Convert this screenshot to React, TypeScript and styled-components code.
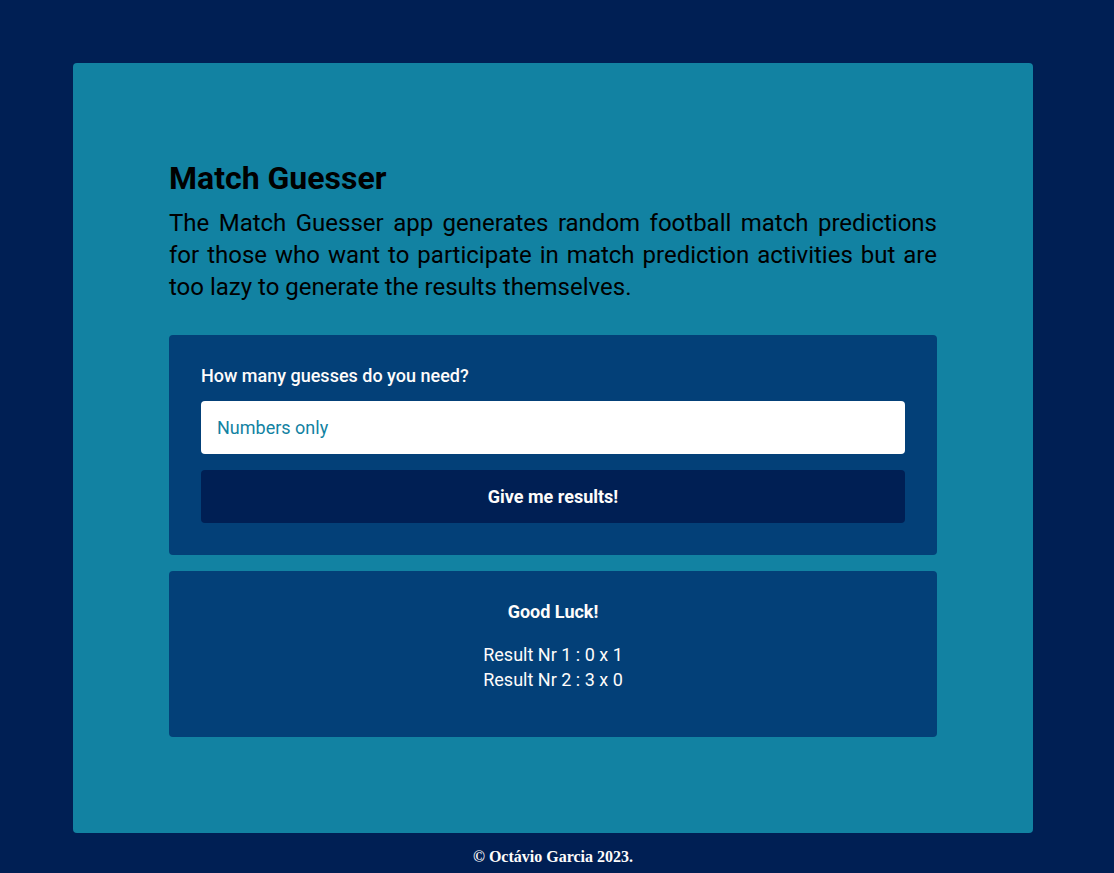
import React from "react";
import styled, { createGlobalStyle } from "styled-components";

const Global = createGlobalStyle`
  html, body { margin: 0; padding: 0; background: #001f54; }
  body { font-family: Roboto, "Noto Sans", sans-serif; }
  * { box-sizing: border-box; }
`;

const Page = styled.div`
  min-height: 873px;
  padding: 63px 81px 0 73px;
  display: flex;
  flex-direction: column;
  align-items: stretch;
`;

const Card = styled.main`
  width: 960px;
  height: 770px;
  background: #1282a2;
  border-radius: 4px;
  padding: 96px 96px 0;
  display: flex;
  flex-direction: column;
`;

const Title = styled.h1`
  margin: 0 0 10px;
  font-size: 32px;
  line-height: 38px;
  font-weight: 700;
  color: #000;
`;

const Intro = styled.p`
  margin: 0 0 32px;
  font-size: 24px;
  line-height: 32px;
  text-align: justify;
  color: #000;
`;

const Panel = styled.section<{ $center?: boolean }>`
  background: #034078;
  border-radius: 4px;
  color: #fefcfb;
  display: flex;
  flex-direction: column;
  text-align: ${(p) => (p.$center ? "center" : "left")};
  & + & { margin-top: 16px; }
`;

const FormPanel = styled(Panel)`
  padding: 32px;
  gap: 16px;
`;

const ResultPanel = styled(Panel)`
  padding: 29px 32px 45px;
`;

const Label = styled.label`
  font-size: 18px;
  line-height: 18px;
  font-weight: 500;
`;

const Input = styled.input`
  height: 53px;
  border: none;
  border-radius: 4px;
  background: #fff;
  padding: 0 16px;
  font-family: Roboto, sans-serif;
  font-size: 18px;
  color: #0a1128;
  caret-color: #000;
  outline: none;
  &::placeholder { color: #1282a2; opacity: 1; }
`;

const Button = styled.button`
  height: 53px;
  border: none;
  border-radius: 4px;
  background: #001f54;
  color: #fefcfb;
  font-family: Roboto, sans-serif;
  font-size: 18px;
  font-weight: 700;
  cursor: pointer;
`;

const LuckHeading = styled.h3`
  margin: 0 0 18px;
  font-size: 18px;
  line-height: 24px;
  font-weight: 700;
`;

const ResultLine = styled.p`
  margin: 0;
  font-size: 18px;
  line-height: 25px;
`;

const Footer = styled.footer`
  width: 960px;
  text-align: center;
  font-family: "Liberation Serif", "Times New Roman", serif;
  font-weight: 700;
  font-size: 16px;
  line-height: 18px;
  color: #fefcfb;
  padding-top: 15px;
`;

const results = ["0 x 1", "3 x 0"];

export default function App() {
  return (
    <>
      <Global />
      <Page>
        <Card>
          <Title>Match Guesser</Title>
          <Intro>
            The Match Guesser app generates random football match predictions
            for those who want to participate in match prediction activities
            but are too lazy to generate the results themselves.
          </Intro>
          <FormPanel>
            <Label htmlFor="guesses">How many guesses do you need?</Label>
            <Input id="guesses" placeholder="Numbers only" autoFocus />
            <Button>Give me results!</Button>
          </FormPanel>
          <ResultPanel $center>
            <LuckHeading>Good Luck!</LuckHeading>
            {results.map((r, i) => (
              <ResultLine key={i}>
                Result Nr {i + 1} : {r}
              </ResultLine>
            ))}
          </ResultPanel>
        </Card>
        <Footer>© Octávio Garcia 2023.</Footer>
      </Page>
    </>
  );
}
